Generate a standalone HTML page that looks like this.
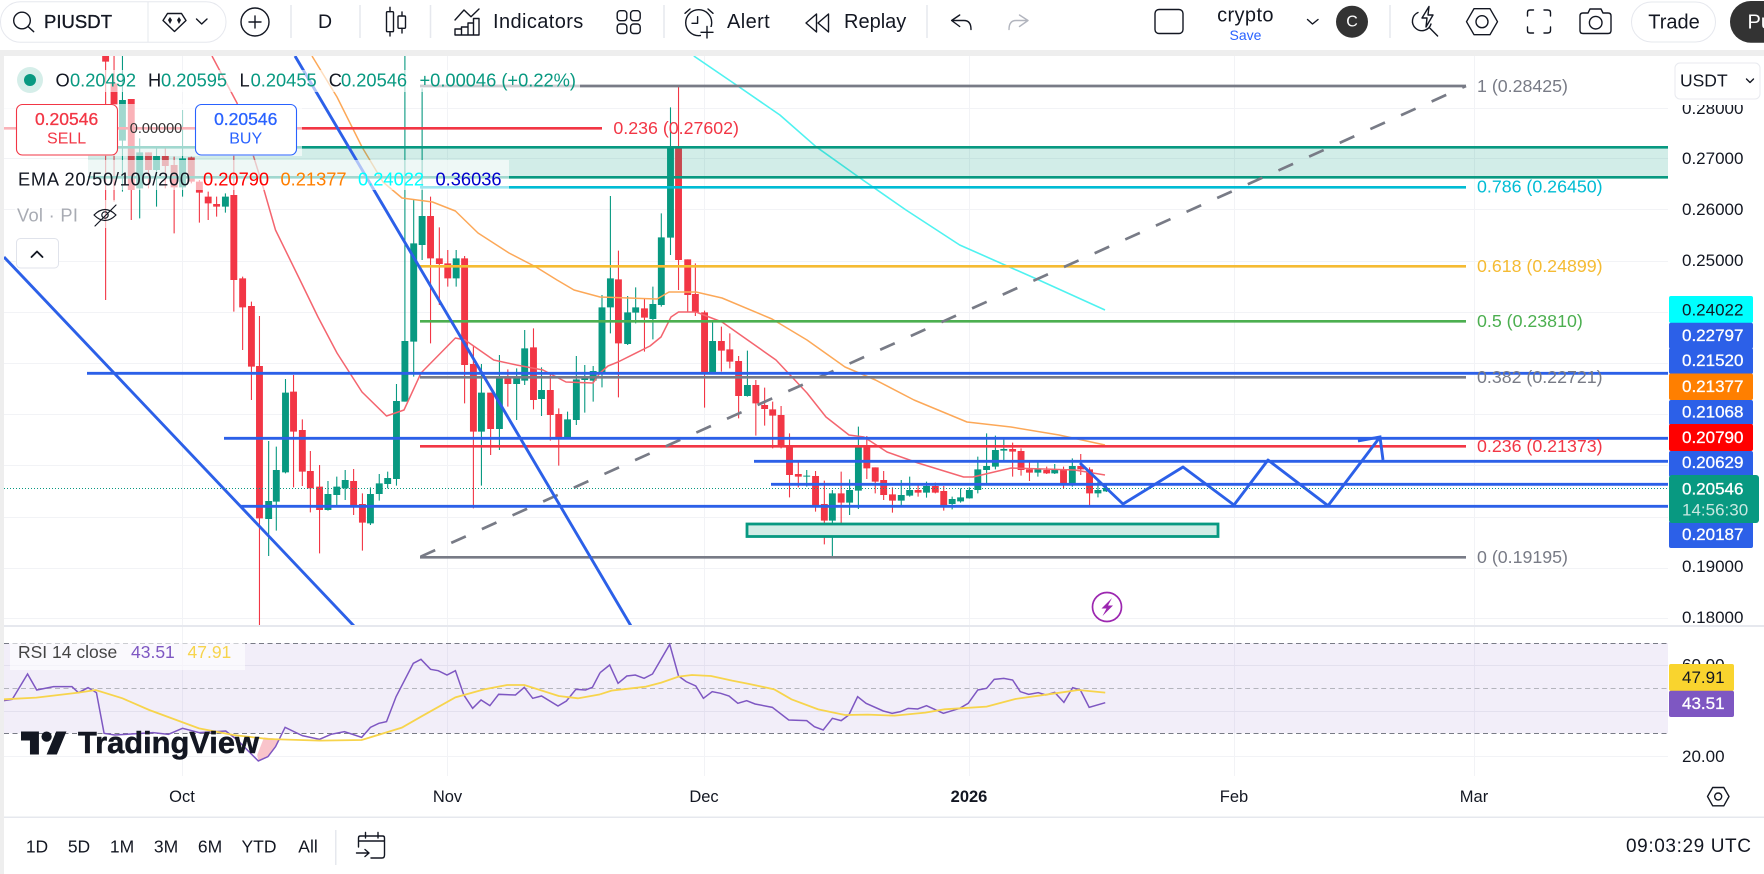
<!DOCTYPE html>
<html lang="en">
<head>
<meta charset="utf-8">
<title>PIUSDT Chart</title>
<style>
html,body{margin:0;padding:0;background:#fff;width:1764px;height:874px;overflow:hidden}
svg{display:block;position:absolute;left:0;top:0}
text{font-family:"Liberation Sans",sans-serif;dominant-baseline:central;fill:#131722}
.w{vector-effect:non-scaling-stroke}
.ic{fill:none;stroke:#131722;stroke-width:1.4;stroke-linecap:round;stroke-linejoin:round}
.tb{font-size:20px;letter-spacing:.4px}
.pr{font-size:17px}
.tag{font-size:17px;fill:#fff;stroke:#fff;stroke-width:.3px}
.leg{font-size:18.3px;fill:#089981}
.fib{font-size:17.8px}
.tm{font-size:16.5px;text-anchor:middle}
.rg{font-size:17.5px;text-anchor:middle}
</style>
</head>
<body>
<svg width="1764" height="874" viewBox="0 0 1764 874" xmlns="http://www.w3.org/2000/svg">
<defs>
<clipPath id="main"><rect x="4" y="56" width="1664" height="570"/></clipPath>
<clipPath id="rsi"><rect x="4" y="628" width="1664" height="148"/></clipPath>
<clipPath id="pu"><rect x="1700" y="0" width="64" height="50"/></clipPath>
</defs>
<rect width="1764" height="874" fill="#fff"/>

<!-- top strip -->
<rect x="0" y="50" width="1764" height="6" fill="#eeeeee"/>
<rect x="0" y="50" width="4" height="824" fill="#eeeeee"/>

<!-- grid -->
<g stroke="#f2f3f6" stroke-width="1">
<path d="M4 108.5H1668M4 158.5H1668M4 209.5H1668M4 261.5H1668M4 312.5H1668M4 363.5H1668M4 414.5H1668M4 465.5H1668M4 517.5H1668M4 568.5H1668M4 618.5H1668"/>
<path d="M182.5 56V776M447.5 56V776M704.5 56V776M969.5 56V776M1234.5 56V776M1474.5 56V776"/>
</g>

<g clip-path="url(#main)">
<!-- candles -->
<g transform="scale(.3827 .33333)">
<path class="w" fill="none" stroke="#f23645" stroke-width="1.1" d="M276 168V900M298 168V605M343 297V660M388 457V565M432 440V565M455 470V700M500 470V550M521 540V668M544 575V660M566 590V650M611 465V935M634 830V1050M657 905V1200M678 948V1878M767 1125V1462M790 1258V1458M811 1353V1537M835 1395V1660M924 1407V1545M947 1480V1652M1125 590V1030M1148 682V915M1170 750V860M1214 768V1210M1237 1038V1525M1282 1178V1365M1327 1108V1220M1394 985V1228M1438 1120V1322M1460 1225V1397M1616 752V1192M1684 895V1055M1773 258V870M1797 778V935M1817 790V948M1841 932V1223M1885 980V1115M1907 1000V1105M1930 1068V1255M1975 1140V1307M1998 1163V1277M2019 1205V1345M2041 1218V1345M2063 1300V1492M2086 1383V1462M2131 1413V1535M2154 1442V1633M2198 1415V1605M2265 1308V1437M2287 1402V1480M2309 1413V1500M2332 1462V1538M2399 1450V1490M2444 1448V1480M2466 1458V1532M2646 1328V1430M2668 1345V1427M2690 1385V1443M2735 1400V1422M2779 1400V1465M2824 1362V1425M2847 1402V1517"/>
<path class="w" fill="none" stroke="#089981" stroke-width="1.1" d="M320 168V575M365 415V655M409 440V620M477 330V590M589 580V638M702 1323V1668M722 1340V1592M746 1137V1420M857 1443V1532M880 1430V1520M902 1410V1500M968 1462V1575M991 1422V1502M1013 1415V1465M1036 1152V1457M1058 168V1205M1081 600V1130M1103 265V780M1192 750V860M1258 1092V1457M1305 1065V1350M1350 1105V1260M1371 990V1155M1415 1102V1248M1483 1235V1315M1506 1068V1275M1528 1095V1238M1550 1098V1205M1573 885V1162M1595 588V1000M1640 888V1035M1661 862V970M1706 860V1018M1728 640V920M1752 322V765M1862 960V1120M1953 1052V1190M2108 1410V1460M2175 1470V1668M2220 1438V1545M2243 1280V1527M2355 1440V1515M2377 1430V1490M2421 1445V1493M2488 1490V1528M2510 1465V1508M2533 1462V1496M2555 1370V1480M2578 1300V1450M2601 1307V1408M2623 1318V1382M2712 1385V1430M2756 1392V1422M2802 1375V1460M2869 1440V1492M2891 1455V1476"/>
<path fill="none" stroke="#f23645" stroke-width="18" d="M276 168V185M298 250V315M343 297V570M388 457V510M432 468V498M455 495V562M500 472V545M521 545V578M544 590V610M566 612V620M611 585V840M634 835V922M657 918V1100M678 1098V1555M767 1175V1295M790 1290V1415M811 1413V1465M835 1460V1530M924 1443V1520M947 1512V1568M1125 648V775M1148 775V792M1170 790V835M1214 775V1095M1237 1092V1295M1282 1178V1287M1327 1132V1152M1394 1042V1200M1438 1170V1245M1460 1242V1312M1616 838V1030M1684 925V953M1773 443V780M1797 778V885M1817 882V937M1841 937V1118M1885 1023V1052M1907 1048V1085M1930 1083V1188M1975 1155V1210M1998 1215V1227M2019 1228V1247M2041 1245V1340M2063 1340V1425M2086 1422V1430M2131 1428V1518M2154 1512V1562M2198 1480V1508M2265 1337V1405M2287 1402V1445M2309 1440V1485M2332 1483V1502M2399 1470V1478M2444 1458V1478M2466 1473V1520M2646 1347V1355M2668 1353V1410M2690 1408V1418M2735 1410V1420M2779 1408V1452M2824 1398V1408M2847 1408V1480"/>
<path fill="none" stroke="#089981" stroke-width="18" d="M320 300V422M365 457V565M409 468V510M477 475V562M589 590V620M702 1503V1557M722 1410V1505M746 1178V1417M857 1482V1530M880 1460V1485M902 1440V1465M968 1482V1570M991 1450V1482M1013 1434V1452M1036 1203V1437M1058 1023V1205M1081 730V1025M1103 648V735M1192 775V835M1258 1178V1295M1305 1130V1287M1350 1135V1152M1371 1045V1142M1415 1170V1197M1483 1258V1312M1506 1138V1260M1528 1132V1140M1550 1113V1142M1573 922V1120M1595 835V922M1640 937V1032M1661 922V938M1706 912V957M1728 712V915M1752 443V713M1862 1023V1118M1953 1155V1188M2108 1427V1430M2175 1480V1562M2220 1470V1508M2243 1335V1472M2355 1485V1502M2377 1470V1487M2421 1458V1478M2488 1497V1512M2510 1492V1504M2533 1470V1495M2555 1408V1470M2578 1398V1410M2601 1350V1400M2623 1347V1352M2712 1408V1418M2756 1408V1420M2802 1398V1452M2869 1470V1480M2891 1464V1474"/>
</g>

<!-- EMAs -->
<polyline fill="none" stroke="#f4656f" stroke-width="1.5" stroke-linejoin="round" points="212,56 237,103 264,190 275.5,230 300,280 318,317 337,353 362,392 386.5,416 404,410 421,373 455.4,338 465,340 493.7,360 516.6,365 543,370 566,382 593,383 600,373 608,366 618,362 650,346 661,337 671,317 678.5,312 696,312 722,322 776,360 807,393 826,417 849,435 864,437 887,452 918,463 963.6,477 973,477 1011,468 1074.6,470 1105,475"/>
<polyline fill="none" stroke="#fca858" stroke-width="1.5" stroke-linejoin="round" points="312,56 337,97 362,147 383,182 402,198 432.5,202 455.4,211 478,233 509,253 536,267 557,280 574,290 600,297 657,299 669,292 696,292 722,298 772,319 807,340 845,367 875.5,380 914,400 967,422 1011,427 1059,435 1105,445"/>
<polyline fill="none" stroke="#4ff2f0" stroke-width="1.6" stroke-linejoin="round" points="693.8,56 737.8,86 779.9,115 816,146.7 860,178 906,210 959.7,245 1034.4,278 1105,310"/>

<!-- zones -->
<rect x="88" y="147.3" width="1600" height="30" fill="#089981" fill-opacity=".18"/>
<path d="M88 147.3H1668M88 177.3H1668" stroke="#089981" stroke-width="2.7"/>
<rect x="747" y="524" width="471" height="12.5" fill="#d2ece6" stroke="#089981" stroke-width="2.8"/>

<!-- fib -->
<g stroke-width="2.7" fill="none">
<path d="M420 86H1466" stroke="#787b86"/>
<path d="M4 128.3H602" stroke="#f23645"/>
<path d="M420 187.3H1466" stroke="#00bcd4"/>
<path d="M420 266.3H1466" stroke="#f5bb33"/>
<path d="M420 321.3H1466" stroke="#4caf50"/>
<path d="M420 377.3H1466" stroke="#787b86"/>
<path d="M420 446.3H1466" stroke="#f23645"/>
<path d="M420 557.3H1466" stroke="#787b86"/>
<path d="M420.6 556.7L1466 86" stroke="#787b86" stroke-dasharray="16 17.6"/>
</g>

<!-- blue lines -->
<g stroke="#2c60e8" stroke-width="2.9" fill="none">
<path d="M87 373.3H1668M224 438.3H1668M754 461.3H1668M771 484.3H1668M240 506.3H1668"/>
<path d="M4 257L354 626"/>
<path d="M295 56L631 626"/>
<path d="M1080 463L1123 504L1183 467L1234 505L1268 460L1328 505.7L1380 437" stroke-linejoin="round"/>
<path d="M1358 441L1380 437L1383 460"/>
</g>
<path d="M4 488.5H1668" stroke="#089981" stroke-width="1" stroke-dasharray="1 2"/>

<!-- fib labels -->
<text class="fib" x="613.4" y="128" fill="#f23645" style="fill:#f23645">0.236 (0.27602)</text>
<text class="fib" x="1477" y="86" style="fill:#787b86">1 (0.28425)</text>
<text class="fib" x="1477" y="186.5" style="fill:#00bcd4">0.786 (0.26450)</text>
<text class="fib" x="1477" y="266" style="fill:#f5bb33">0.618 (0.24899)</text>
<text class="fib" x="1477" y="321" style="fill:#4caf50">0.5 (0.23810)</text>
<text class="fib" x="1477" y="377" style="fill:#787b86">0.382 (0.22721)</text>
<text class="fib" x="1477" y="446" style="fill:#f23645">0.236 (0.21373)</text>
<text class="fib" x="1477" y="557" style="fill:#787b86">0 (0.19195)</text>

<!-- lightning -->
<circle cx="1107" cy="607" r="14.5" fill="#fff" stroke="#9c27b0" stroke-width="1.7"/>
<path d="M1112 598L1101.5 608.5H1106.5L1102.5 616L1113 605.5H1108Z" fill="#9c27b0"/>
</g>

<!-- legend fades -->
<g fill="#fff" fill-opacity=".62">
<rect x="15" y="70" width="565" height="22"/>
<rect x="4" y="104" width="298" height="52"/>
<rect x="15" y="160" width="494" height="30"/>
<rect x="15" y="200" width="105" height="28"/>
</g>

<!-- legend -->
<circle cx="30" cy="80" r="13" fill="#d5eee9"/>
<circle cx="30" cy="80" r="6" fill="#089981"/>
<text class="leg" x="55.5" y="80" style="fill:#131722">O</text>
<text class="leg" x="70" y="80">0.20492</text>
<text class="leg" x="148" y="80" style="fill:#131722">H</text>
<text class="leg" x="161" y="80">0.20595</text>
<text class="leg" x="239.5" y="80" style="fill:#131722">L</text>
<text class="leg" x="250.6" y="80">0.20455</text>
<text class="leg" x="328.8" y="80" style="fill:#131722">C</text>
<text class="leg" x="341" y="80">0.20546</text>
<text class="leg" x="419.5" y="80">+0.00046 (+0.22%)</text>

<rect x="16.5" y="104.5" width="101" height="50.5" rx="6" fill="#fff" stroke="#f23645" stroke-width="1.1"/>
<text x="66.6" y="119" text-anchor="middle" style="font-size:17.5px;fill:#f23645;stroke:#f23645;stroke-width:.3px">0.20546</text>
<text x="66.6" y="139" text-anchor="middle" style="font-size:16px;fill:#f23645">SELL</text>
<rect x="195.5" y="104.5" width="101" height="50.5" rx="6" fill="#fff" stroke="#2962ff" stroke-width="1.1"/>
<text x="245.7" y="119" text-anchor="middle" style="font-size:17.5px;fill:#2962ff;stroke:#2962ff;stroke-width:.3px">0.20546</text>
<text x="245.7" y="139" text-anchor="middle" style="font-size:16px;fill:#2962ff">BUY</text>
<text x="156" y="129" text-anchor="middle" style="font-size:14.5px;fill:#333">0.00000</text>

<text x="18" y="179" textLength="172" lengthAdjust="spacing" style="font-size:18.3px">EMA 20/50/100/200</text>
<text class="leg" x="203" y="179" style="fill:#ff0000">0.20790</text>
<text class="leg" x="280.5" y="179" style="fill:#ff7f00">0.21377</text>
<text class="leg" x="358" y="179" style="fill:#00ffff">0.24022</text>
<text class="leg" x="435.5" y="179" style="fill:#0000cc">0.36036</text>

<text x="17" y="215" textLength="61" lengthAdjust="spacing" style="font-size:18.3px;fill:#a8abb3">Vol · PI</text>
<g class="ic" style="stroke-width:1.2">
<path d="M94 215Q105 204 116 215Q105 226 94 215Z"/><circle cx="105" cy="215" r="3.2"/><path d="M95 226L116 205"/>
</g>
<rect x="16.5" y="238.5" width="42" height="29.5" rx="4" fill="#fff" stroke="#e0e3eb"/>
<path class="ic" style="stroke-width:1.8" d="M31.5 257L37 251.5L42.5 257"/>

<!-- price axis -->
<text class="pr" x="1682" y="108.5">0.28000</text>
<rect x="1669" y="56" width="95" height="49" fill="#fff"/>
<rect x="1675" y="63" width="85" height="36" rx="5" fill="#fff" stroke="#e8eaef"/>
<text x="1680" y="80.7" style="font-size:17.5px">USDT</text>
<path class="ic" d="M1746.5 79L1750 82.5L1753.5 79"/>
<text class="pr" x="1682" y="158.7">0.27000</text>
<text class="pr" x="1682" y="209.5">0.26000</text>
<text class="pr" x="1682" y="260.5">0.25000</text>
<text class="pr" x="1682" y="566.7">0.19000</text>
<text class="pr" x="1682" y="617.5">0.18000</text>
<text class="pr" x="1682" y="665">60.00</text>
<text class="pr" x="1682" y="756.5">20.00</text>

<rect x="1669" y="296" width="84" height="27" rx="2" fill="#00ffff"/>
<text class="pr" x="1682" y="310">0.24022</text>
<rect x="1669" y="322.7" width="84" height="26" rx="2" fill="#2c60e8"/>
<text class="tag" x="1682" y="335.3">0.22797</text>
<rect x="1669" y="348" width="84" height="26" rx="2" fill="#2c60e8"/>
<text class="tag" x="1682" y="360.7">0.21520</text>
<rect x="1669" y="400" width="84" height="25" rx="2" fill="#2c60e8"/>
<text class="tag" x="1682" y="412">0.21068</text>
<rect x="1669" y="373.5" width="84" height="26.5" rx="2" fill="#ff7f00"/>
<text class="tag" x="1682" y="386.7">0.21377</text>
<rect x="1669" y="451" width="84" height="26" rx="2" fill="#2c60e8"/>
<text class="tag" x="1682" y="462.7">0.20629</text>
<rect x="1669" y="424" width="84" height="27" rx="2" fill="#ff0000"/>
<text class="tag" x="1682" y="437.3">0.20790</text>
<rect x="1669" y="521" width="84" height="27" rx="2" fill="#2c60e8"/>
<text class="tag" x="1682" y="534.7">0.20187</text>
<rect x="1669" y="475" width="90" height="48" rx="3" fill="#089981"/>
<text class="tag" x="1682" y="489">0.20546</text>
<text x="1682" y="510" style="font-size:17px;fill:#c9e8e1">14:56:30</text>

<!-- pane separator -->
<rect x="4" y="625" width="1760" height="2" fill="#e6e8ee"/>

<!-- RSI pane -->
<rect x="4" y="643.3" width="1664" height="90" fill="#7e57c2" fill-opacity=".1"/>
<path d="M4 665.5H1668M4 711.5H1668" stroke="#e3e0ee"/>
<path d="M4 756.5H1668" stroke="#f2f3f6"/>
<path d="M4 643.5H1668M4 733.5H1668" stroke="#787b86" stroke-width="1" stroke-dasharray="5 3.5"/>
<path d="M4 688.5H1668" stroke="#b4b5bd" stroke-width="1" stroke-dasharray="5 3.5"/>
<g clip-path="url(#rsi)">
<g transform="scale(.3827 .33333) translate(0 1800)">
<path d="M672 465L675 483L700 470L720 440L730 417L690 412Z" fill="#f9c4cb"/>
<polyline class="w" fill="none" stroke="#7e57c2" stroke-width="1.5" points="10,302 32,298 72,222 96,270 140,260 188,260 205,278 230,263 252,278 272,400 300,405 400,398 440,403 477,385 520,398 590,393 620,420 675,483 700,470 720,440 745,382 790,407 835,418 865,403 900,395 945,412 968,382 990,370 1010,365 1035,290 1080,190 1100,178 1125,208 1145,212 1168,225 1190,212 1212,285 1235,325 1257,300 1280,317 1303,283 1347,285 1370,262 1392,295 1415,288 1458,318 1480,303 1505,268 1530,270 1548,262 1568,218"/>
<polyline class="w" fill="none" stroke="#f7d44c" stroke-width="1.8" points="10,298 95,293 205,278 250,270 320,295 390,330 520,385 610,405 700,417 835,422 945,420 1050,383 1100,350 1190,292 1265,268 1325,255 1370,255 1460,288 1510,295 1568,283"/>
</g>
<g transform="scale(.3827 .33333) translate(1568 1800)">
<polyline class="w" fill="none" stroke="#7e57c2" stroke-width="1.5" points="0,218 25,195 47,250 70,228 92,225 115,235 137,222 182,133 205,228 225,245 250,258 270,295 293,275 315,280 337,288 360,310 383,302 405,312 450,322 493,360 540,362 560,380 583,390 607,355 630,362 650,345 673,290 695,310 740,333 763,340 785,335 805,325 830,327 853,317 897,340 940,325 962,310 987,270 1010,265 1030,238 1055,235 1078,240 1098,275 1120,283 1145,278 1165,285 1188,277 1212,307 1235,263 1255,270 1278,322 1320,308"/>
<polyline class="w" fill="none" stroke="#f7d44c" stroke-width="1.8" points="0,283 30,272 120,260 160,248 205,230 240,225 290,228 345,242 390,252 455,268 500,298 570,328 640,345 700,344 770,347 850,338 900,328 1010,320 1085,297 1190,280 1250,270 1320,278"/>
</g>
</g>
<rect x="10" y="643" width="235" height="27" fill="#fff" fill-opacity=".62"/>
<text x="18" y="652" style="font-size:17.5px;fill:#444">RSI 14 close</text>
<text x="131" y="652" style="font-size:17.5px;fill:#7e57c2">43.51</text>
<text x="187.5" y="652" style="font-size:17.5px;fill:#f7d44c">47.91</text>

<rect x="1669" y="664" width="65" height="27" rx="2" fill="#f9d42e"/>
<text class="pr" x="1682" y="677.5">47.91</text>
<rect x="1669" y="690.7" width="65" height="26.3" rx="2" fill="#7e57c2"/>
<text class="tag" x="1682" y="703.5">43.51</text>

<!-- TradingView logo -->
<g transform="translate(21 731.5) scale(1.28)" fill="#131722">
<path d="M14 18H7V7H0V0H14ZM28 18H20L27.5 0H35.5Z"/><circle cx="20" cy="4" r="4"/>
</g>
<text x="78" y="742.5" textLength="181" lengthAdjust="spacingAndGlyphs" style="font-size:31px;font-weight:700;stroke:#131722;stroke-width:.5px">TradingView</text>

<!-- time axis -->
<text class="tm" x="182" y="797">Oct</text>
<text class="tm" x="447.5" y="797">Nov</text>
<text class="tm" x="704" y="797">Dec</text>
<text class="tm" x="969" y="797" style="font-weight:700">2026</text>
<text class="tm" x="1234" y="797">Feb</text>
<text class="tm" x="1474" y="797">Mar</text>
<path class="ic" d="M1707.5 796.5L1712.7 787.5H1723.8L1729 796.5L1723.8 805.8H1712.7Z"/>
<circle class="ic" cx="1718.2" cy="796.5" r="3.5"/>
<rect x="4" y="816.5" width="1760" height="1.5" fill="#e6e8ee"/>

<!-- bottom bar -->
<text class="rg" x="37" y="846.7">1D</text>
<text class="rg" x="79" y="846.7">5D</text>
<text class="rg" x="122" y="846.7">1M</text>
<text class="rg" x="166" y="846.7">3M</text>
<text class="rg" x="210" y="846.7">6M</text>
<text class="rg" x="259" y="846.7">YTD</text>
<text class="rg" x="308" y="846.7">All</text>
<rect x="335" y="830" width="1.5" height="35" fill="#e6e8ee"/>
<path class="ic" d="M358.5 847V838Q358.5 836 360.5 836H382.5Q384.5 836 384.5 838V855Q384.5 858 382 858H371M358.5 841H384.5M365.5 832.5V838M378 832.5V838M356.5 853H369M365 849.5L369 853L365 856.5"/>
<text x="1626" y="846.7" textLength="125" lengthAdjust="spacing" style="font-size:19px">09:03:29 UTC</text>

<!-- top toolbar -->
<rect x="0.5" y="1.7" width="225.5" height="40.5" rx="20" fill="#fff" stroke="#e6e8ee"/>
<path d="M148 2V42" stroke="#e6e8ee"/>
<circle class="ic" cx="22" cy="20.5" r="8.3"/>
<path class="ic" d="M28 26.5L33.7 31.7"/>
<text x="44" y="21.5" textLength="68" lengthAdjust="spacing" style="font-size:18.5px;stroke:#131722;stroke-width:.35px">PIUSDT</text>
<path class="ic" d="M167.5 13.5H181.5L186 20.5L174.5 31.5L163 20.5Z"/>
<path d="M170 17L172 20L170 24L168 20ZM179 17L181 20L179 24L177 20Z" fill="#131722"/>
<path class="ic" d="M196.5 19L201.7 24L207 19"/>
<circle class="ic" cx="255" cy="22" r="14"/>
<path class="ic" d="M249 22H261M255 16V28"/>
<path d="M291 5V38M360 5V38M430.5 5V38M664 5V38M927 5V38M1390 5V38" stroke="#e6e8ee" stroke-width="1.5"/>
<text x="325" y="22" text-anchor="middle" style="font-size:19.5px">D</text>
<path class="ic" d="M390 7.3V11.7M390 31.7V36M402 12V16M402 28.3V33"/>
<rect class="ic" x="386.5" y="11.7" width="7" height="20" rx="1"/>
<rect class="ic" x="398" y="16" width="7.5" height="12.3" rx="1"/>
<path class="ic" d="M455 20L464 10L471 16.7L479 9"/>
<path class="ic" d="M455 35V29H461.5V35ZM461.5 35V27H468V35ZM468 35V23H473.5V35ZM473.5 35V18.5H479V35Z"/>
<text class="tb" x="493" y="22">Indicators</text>
<rect class="ic" x="617.2" y="10.7" width="9.6" height="10" rx="3"/>
<rect class="ic" x="630.6" y="10.7" width="9.6" height="10" rx="3"/>
<rect class="ic" x="617.2" y="24" width="9.6" height="9.5" rx="3"/>
<rect class="ic" x="630.6" y="24" width="9.6" height="9.5" rx="3"/>
<circle class="ic" cx="698.7" cy="22.7" r="13"/>
<rect x="701" y="27" width="14" height="12" fill="#fff"/>
<path class="ic" d="M697.6 16.7V23.3H692M685 13.3L690 9M708 9L713 13.3M707 26.5V38M701 32.3H713"/>
<text class="tb" x="727" y="22">Alert</text>
<path class="ic" d="M806 23L816.5 14V32ZM818 23L828.5 14V32Z"/>
<text class="tb" x="844" y="22" style="letter-spacing:0">Replay</text>
<path class="ic" d="M959.7 15L951.6 20.5L959.7 26.5M952 20.5H964Q971 20.5 971 29.5"/>
<path class="ic" style="stroke:#b2b5be" d="M1019.5 15L1028 20.5L1019.5 26.5M1028 20.5H1016Q1009 20.5 1009 29.5"/>
<rect class="ic" x="1155" y="9.5" width="28" height="24" rx="4"/>
<text class="tb" x="1245.5" y="15.7" text-anchor="middle">crypto</text>
<text x="1245.5" y="35" text-anchor="middle" style="font-size:14px;fill:#2962ff">Save</text>
<path class="ic" d="M1307.5 19.5L1312.5 24L1318 19.5"/>
<circle cx="1352" cy="21.7" r="16" fill="#333"/>
<text x="1352" y="22" text-anchor="middle" style="font-size:16px;fill:#fff">C</text>
<path class="ic" d="M1418 12.5A9.5 9.5 0 1 0 1431 24M1430 28.3L1437.6 36"/>
<path class="ic" style="fill:#fff" d="M1429 6.5L1422 18H1427L1426 27L1433 15H1428Z"/>
<path class="ic" d="M1466.5 21.7L1474 8.7H1490L1497.5 21.7L1490 34.7H1474Z"/>
<circle class="ic" cx="1482" cy="21.7" r="6"/>
<path class="ic" d="M1527.5 16V12.5Q1527.5 10 1530 10H1533.5M1544 10H1547.5Q1550.5 10 1550.5 12.5V16M1550.5 27V30.5Q1550.5 33 1547.5 33H1544M1533.5 33H1530Q1527.5 33 1527.5 30.5V27"/>
<path class="ic" d="M1580 16Q1580 13 1583 13H1588L1590 9H1601L1603 13H1608Q1611 13 1611 16V30.5Q1611 33.5 1608 33.5H1583Q1580 33.5 1580 30.5Z"/>
<circle class="ic" cx="1595.7" cy="22.7" r="6.3"/>
<rect x="1631.5" y="2" width="84" height="40" rx="20" fill="#fff" stroke="#e6e8ee"/>
<text x="1674" y="22.5" text-anchor="middle" style="font-size:20px">Trade</text>
<g clip-path="url(#pu)">
<rect x="1730" y="1" width="80" height="41.7" rx="20.8" fill="#333"/>
<text x="1747.5" y="22.5" style="font-size:20px;fill:#fff">Pu</text>
</g>
</svg>
</body>
</html>
